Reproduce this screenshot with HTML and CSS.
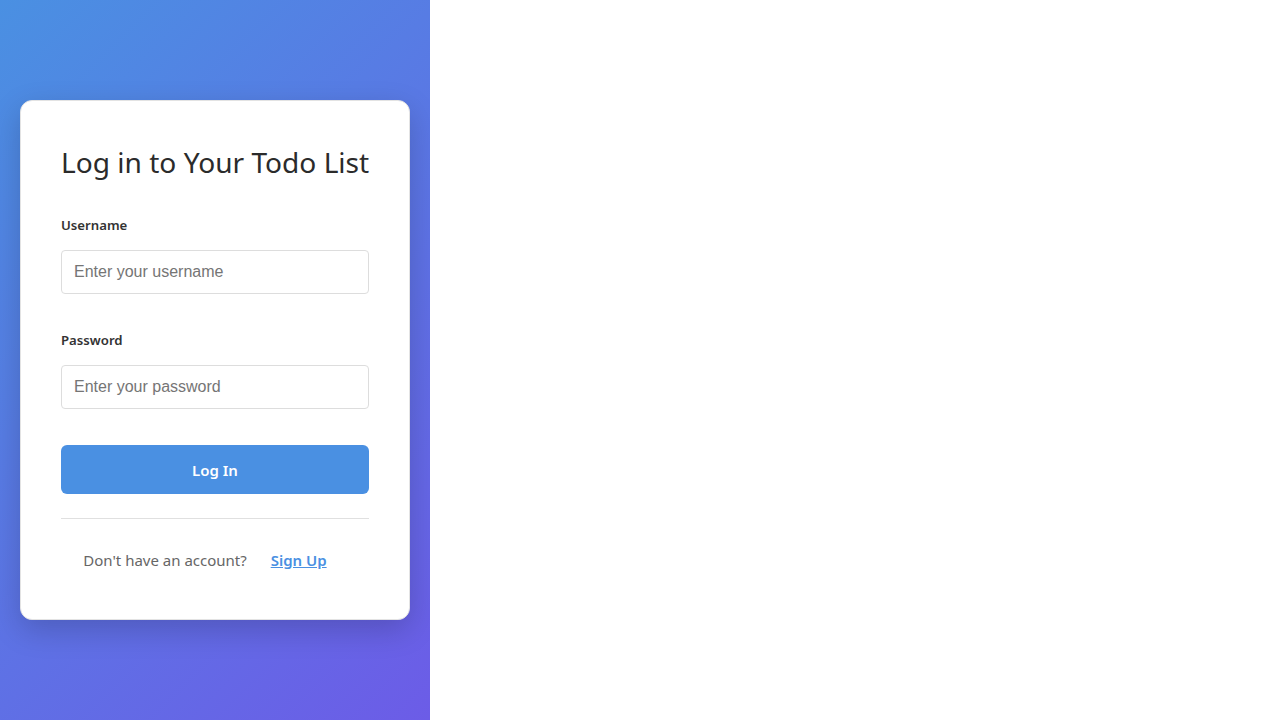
FILE: index.html
```html
<!DOCTYPE html>
<html lang="en">
<head>
<meta charset="utf-8">
<title>Log in</title>
<link rel="stylesheet" href="styles.css">
</head>
<body>
<div class="page">
  <section class="panel">
    <div class="card">
      <h1 class="title">Log in to Your Todo List</h1>
      <form class="form">
        <div class="field">
          <label class="label" for="username">Username</label>
          <input class="input" id="username" type="text" placeholder="Enter your username">
        </div>
        <div class="field field-last">
          <label class="label" for="password">Password</label>
          <input class="input" id="password" type="password" placeholder="Enter your password">
        </div>
        <button class="btn" type="button">Log In</button>
      </form>
      <div class="divider"></div>
      <p class="footer">Don't have an account? <button class="link" type="button">Sign Up</button></p>
    </div>
  </section>
  <main class="main"></main>
</div>
</body>
</html>
```
FILE: styles.css
```css
* { box-sizing: border-box; }
html, body { margin: 0; padding: 0; background: #fff; }
body { font-family: "Noto Sans", "Open Sans", sans-serif; color: #333; }
.page { display: flex; height: 720px; }
.panel {
  width: 430px;
  flex: 0 0 430px;
  height: 720px;
  display: flex;
  align-items: center;
  justify-content: center;
  background: linear-gradient(135deg, #4a90e2 0%, #6c5ce7 100%);
}
.main { flex: 1; background: #fff; }
.card {
  width: 390px;
  height: 520px;
  background: #fff;
  border: 1px solid #e3e3e3;
  border-radius: 12px;
  padding: 40px;
  box-shadow: 0 10px 30px rgba(0, 0, 0, 0.18);
}
.title {
  margin: 0 0 32px;
  font-size: 28.1px;
  font-weight: 400;
  line-height: 43px;
  white-space: nowrap;
  color: #2b2b2b;
}
.form { display: flex; flex-direction: column; }
.field { display: flex; flex-direction: column; margin-bottom: 37px; }
.field-last { margin-bottom: 36px; }
.label {
  font-size: 13.2px;
  font-weight: 600;
  line-height: 18px;
  margin-bottom: 16px;
  color: #333;
}
.input {
  height: 44px;
  padding: 0 12px;
  border: 1px solid #ddd;
  border-radius: 4px;
  font-family: "Liberation Sans", Arial, sans-serif;
  font-size: 16px;
  color: #333;
}
.input::placeholder { color: #757575; }
.btn {
  height: 49px;
  border: 0;
  border-radius: 6px;
  background: #4a90e2;
  color: #fff;
  font-family: inherit;
  font-size: 15px;
  font-weight: 600;
}
.divider { height: 1px; background: #e0e0e0; margin: 24px 0 29px; }
.footer {
  margin: 0;
  text-align: center;
  font-size: 15px;
  line-height: 24px;
  color: #666;
}
.link {
  border: 0;
  background: none;
  padding: 0 20px;
  font-family: inherit;
  font-size: 15px;
  font-weight: 600;
  color: #4a90e2;
  text-decoration: underline;
}
```
